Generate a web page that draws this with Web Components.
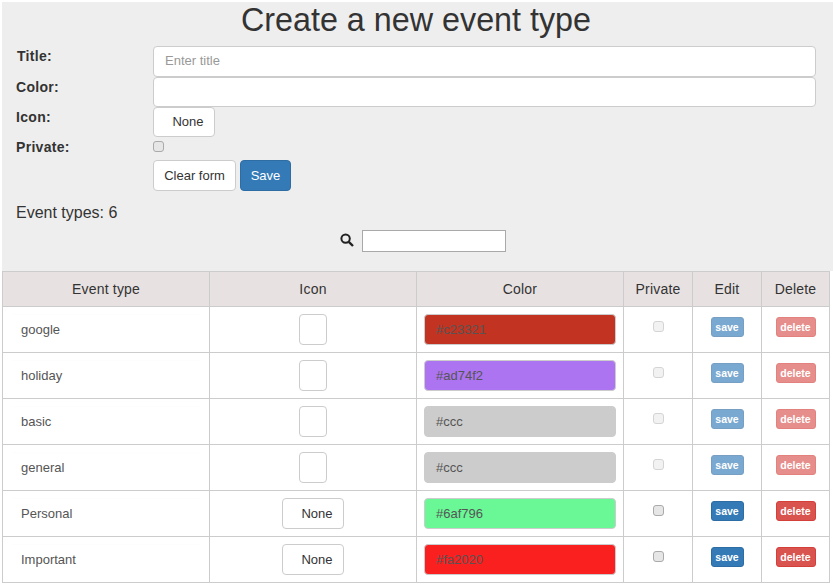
<!DOCTYPE html>
<html>
<head>
<meta charset="utf-8">
<title>Event types</title>
<style>
  body {
    margin: 2px 0 0 2px;
    font-family: "Liberation Sans", Arial, sans-serif;
    font-size: 14px;
    color: #333;
    background: #fff;
  }
</style>
</head>
<body>
<event-form></event-form>
<event-table>
  <event-row name="google" color="#c23321" locked></event-row>
  <event-row name="holiday" color="#ad74f2" locked></event-row>
  <event-row name="basic" color="#ccc" locked></event-row>
  <event-row name="general" color="#ccc" locked></event-row>
  <event-row name="Personal" color="#6af796" icon="None"></event-row>
  <event-row name="Important" color="#fa2020" icon="None"></event-row>
</event-table>

<script>
const sharedStyles = `
  .box {
    box-sizing: border-box;
    height: 31px;
    padding: 0 11px 1px;
    display: flex;
    align-items: center;
    background: #fff;
    border: 1px solid #ccc;
    border-radius: 4px;
    color: #555;
    font-size: 13px;
  }
  .btn {
    box-sizing: border-box;
    display: flex;
    align-items: center;
    justify-content: center;
    height: 31px;
    padding-bottom: 1px;
    background: #fff;
    border: 1px solid #ccc;
    border-radius: 4px;
    color: #333;
    font-size: 13px;
  }
  .check {
    box-sizing: border-box;
    display: block;
    width: 11px;
    height: 11px;
    border: 1px solid #aaa;
    border-radius: 3px;
    background: #e6e6e6;
  }
  .check.off {
    opacity: .5;
  }
`;

const formTemplate = document.createElement('template');
formTemplate.innerHTML = `
  <style>
    ${sharedStyles}
    :host {
      display: block;
      box-sizing: border-box;
      height: 269px;
      background: #eee;
      padding: 0 14px;
    }
    h1 {
      margin: 0;
      height: 44px;
      line-height: 36px;
      font-size: 32.3px;
      font-weight: 400;
      text-align: center;
      width: 800px;
      color: #333;
    }
    .fields {
      display: grid;
      grid-template-columns: 137px 663px;
      grid-template-rows: 31px 30px 30px 23px 31px;
    }
    label {
      font-weight: 700;
      font-size: 14px;
      letter-spacing: .3px;
      line-height: 20px;
    }
    .title-label { padding-left: 1px; }
    .placeholder {
      color: #999;
      padding-bottom: 2px;
    }
    .none {
      width: 62px;
      padding-left: 8px;
      height: 30px;
    }
    .color-box { height: 30px; }
    .private-box { padding-top: 4px; }
    .actions {
      grid-column: 2;
      display: flex;
      gap: 4px;
    }
    .clear { width: 83px; }
    .save {
      width: 51px;
      background: #337ab7;
      border-color: #2e6da4;
      color: #fff;
    }
    .count {
      margin-top: 12px;
      font-size: 16px;
      line-height: 20px;
    }
    .search {
      display: flex;
      align-items: center;
      gap: 8px;
      margin-top: 7px;
      padding-left: 324px;
    }
    .search svg { display: block; margin-top: -3px; }
    .search div {
      box-sizing: border-box;
      width: 144px;
      height: 22px;
      background: #fff;
      border: 1px solid #a9a9a9;
    }
  </style>
  <h1>Create a new event type</h1>
  <div class="fields">
    <label class="title-label">Title:</label>
    <div class="box placeholder">Enter title</div>
    <label>Color:</label>
    <div class="box color-box"></div>
    <label>Icon:</label>
    <div class="btn none">None</div>
    <label>Private:</label>
    <div class="private-box"><span class="check"></span></div>
    <div class="actions">
      <div class="btn clear">Clear form</div>
      <div class="btn save">Save</div>
    </div>
  </div>
  <div class="count">Event types: 6</div>
  <div class="search">
    <svg width="14" height="14" viewBox="0 0 14 14" fill="none" stroke="#222">
      <circle cx="5.6" cy="5.6" r="4.2" stroke-width="2"/>
      <path d="M8.8 8.8 L13 13" stroke-width="2.4"/>
    </svg>
    <div></div>
  </div>
`;

class EventForm extends HTMLElement {
  constructor() {
    super();
    this.attachShadow({ mode: 'open' });
    this.shadowRoot.appendChild(formTemplate.content.cloneNode(true));
  }
}

const tableTemplate = document.createElement('template');
tableTemplate.innerHTML = `
  <style>
    :host {
      display: block;
      width: 827px;
      border-right: 1px solid #ccc;
      border-bottom: 1px solid #ccc;
    }
    .head {
      box-sizing: border-box;
      display: grid;
      grid-template-columns: 207px 207px 207px 69px 69px 68px;
      height: 35px;
      background: #e7e1e1;
      border-top: 1px solid #ccc;
    }
    .head div {
      border-left: 1px solid #ccc;
      display: flex;
      align-items: center;
      justify-content: center;
      letter-spacing: .2px;
    }
  </style>
  <div class="head">
    <div>Event type</div>
    <div>Icon</div>
    <div>Color</div>
    <div>Private</div>
    <div>Edit</div>
    <div>Delete</div>
  </div>
  <slot></slot>
`;

class EventTable extends HTMLElement {
  constructor() {
    super();
    this.attachShadow({ mode: 'open' });
    this.shadowRoot.appendChild(tableTemplate.content.cloneNode(true));
  }
}

const rowTemplate = document.createElement('template');
rowTemplate.innerHTML = `
  <style>
    ${sharedStyles}
    :host {
      display: grid;
      grid-template-columns: 207px 207px 207px 69px 69px 68px;
      height: 45px;
      border-top: 1px solid #ccc;
    }
    .cell {
      border-left: 1px solid #ccc;
      display: flex;
      justify-content: center;
      align-items: center;
      min-width: 0;
    }
    .name {
      justify-content: flex-start;
      padding-left: 7px;
    }
    .name div {
      box-sizing: border-box;
      width: 192px;
      height: 31px;
      padding: 0 0 1px 11px;
      display: flex;
      align-items: center;
      color: #555;
      font-size: 13px;
      border-radius: 4px;
      box-shadow: inset 0 1px 1px rgba(0, 0, 0, .012);
    }
    .icon .btn { width: 28px; }
    .icon .btn.wide { width: 62px; padding-left: 8px; }
    .color .box { width: 192px; }
    .private .check { margin-top: -6px; }
    .mini {
      box-sizing: border-box;
      height: 20px;
      margin-top: -6px;
      display: flex;
      align-items: center;
      justify-content: center;
      border-radius: 3px;
      color: #fff;
      font-size: 10.5px;
      font-weight: 700;
    }
    .save {
      width: 33px;
      background: #337ab7;
      border: 1px solid #2e6da4;
    }
    .delete {
      width: 40px;
      background: #d9534f;
      border: 1px solid #d43f3a;
    }
    .off { opacity: .65; }
  </style>
  <div class="cell name"><div class="label"></div></div>
  <div class="cell icon"><div class="btn"></div></div>
  <div class="cell color"><div class="box"></div></div>
  <div class="cell private"><span class="check"></span></div>
  <div class="cell edit"><div class="mini save">save</div></div>
  <div class="cell remove"><div class="mini delete">delete</div></div>
`;

class EventRow extends HTMLElement {
  constructor() {
    super();
    this.attachShadow({ mode: 'open' });
    this.shadowRoot.appendChild(rowTemplate.content.cloneNode(true));

    const root = this.shadowRoot;
    root.querySelector('.label').textContent = this.getAttribute('name');

    const colorBox = root.querySelector('.color .box');
    colorBox.textContent = this.getAttribute('color');
    colorBox.style.background = this.getAttribute('color');

    if (this.hasAttribute('icon')) {
      const iconBtn = root.querySelector('.icon .btn');
      iconBtn.textContent = this.getAttribute('icon');
      iconBtn.classList.add('wide');
    }

    if (this.hasAttribute('locked')) {
      root.querySelector('.check').classList.add('off');
      root.querySelector('.save').classList.add('off');
      root.querySelector('.delete').classList.add('off');
    }
  }
}

window.customElements.define('event-form', EventForm);
window.customElements.define('event-table', EventTable);
window.customElements.define('event-row', EventRow);
</script>
</body>
</html>
